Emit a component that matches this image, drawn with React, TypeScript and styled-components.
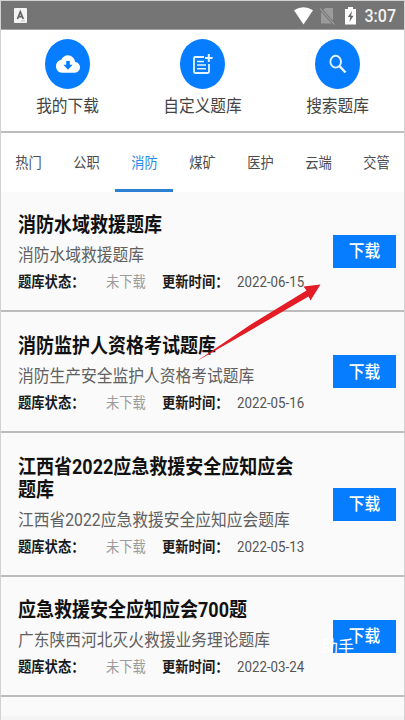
import React from 'react';
import styled, { createGlobalStyle } from 'styled-components';

const GlobalStyle = createGlobalStyle`
  * { box-sizing: border-box; }
  body {
    margin: 0;
    font-family: Roboto, "Noto Sans CJK SC", sans-serif;
    background: #fafafa;
  }
`;

const Screen = styled.div`
  position: relative;
  width: 405px;
  height: 720px;
  overflow: hidden;
  display: flex;
  flex-direction: column;
  background: #fafafa;
  border: 1px solid #d2d2d2;
  border-bottom: 0;
`;

const StatusBar = styled.header`
  flex: none;
  height: 29px;
  padding: 1px 8px 0 13px;
  display: flex;
  align-items: center;
  background: #757575;
  border-bottom: 1px solid #a5a5a5;
  color: #fff;
`;

const StatusIcons = styled.div`
  margin-left: auto;
  display: flex;
  align-items: center;
`;

/* Glyphs are taller than they are wide throughout the app. */
const Tall = styled.span`
  display: block;
  white-space: nowrap;
  transform: scaleY(1.11);
`;

const Clock = styled(Tall)`
  margin-left: 8px;
  font-size: 16px;
  line-height: 20px;
  font-weight: 500;
  color: #f3f3f3;
`;

const Actions = styled.section`
  flex: none;
  height: 103px;
  padding-top: 9px;
  display: grid;
  grid-template-columns: repeat(3, 135px);
  background: #fff;
  border-bottom: 2px solid #bdbdbd;
`;

const Action = styled.div`
  display: flex;
  flex-direction: column;
  align-items: center;
  margin-left: -2px;
`;

const Disc = styled.div`
  width: 45px;
  height: 50px;
  border-radius: 50%;
  background: #067dff;
  display: flex;
  align-items: center;
  justify-content: center;
`;

const ActionLabel = styled(Tall)`
  margin-top: 6px;
  font-size: 15.7px;
  line-height: 22px;
  color: #444;
`;

const Tabs = styled.nav`
  flex: none;
  height: 59px;
  display: flex;
  margin-left: -2px;
  background: #fff;
`;

const Tab = styled.div<{ $active?: boolean }>`
  flex: 0 0 58px;
  height: 59px;
  padding: 21px 0 0 1px;
  text-align: center;
  font-size: 13.2px;
  line-height: 20px;
  color: ${p => (p.$active ? '#2b8ae6' : '#4c4c4c')};
  border-bottom: 3px solid ${p => (p.$active ? '#2b80d3' : 'transparent')};
`;

const Row = styled.article<{ $height: number }>`
  flex: none;
  height: ${p => p.$height}px;
  padding: 0 8px 0 17px;
  display: flex;
  align-items: center;
  justify-content: space-between;
  border-bottom: 2px solid #bcbcbc;
`;

const Info = styled.div`
  width: 290px;
  padding-top: 5px;
`;

const Title = styled(Tall)`
  font-size: 18px;
  line-height: 23px;
  font-weight: 700;
  color: #111;
`;

const Subtitle = styled(Tall)`
  margin-top: 7px;
  font-size: 15.75px;
  line-height: 23px;
  color: #606060;
`;

const Meta = styled(Tall)`
  margin-top: 6px;
  display: grid;
  grid-template-columns: 88px 56px 75px 1fr;
  font-size: 13.3px;
  line-height: 22px;
  color: #555;
`;

const Key = styled.b`
  color: #1b1b1b;
`;

const State = styled.span`
  color: #9c9c9c;
`;

const DownloadButton = styled.button`
  flex: none;
  width: 63px;
  height: 33px;
  padding: 0;
  border: 0;
  background: #067dff;
  color: #fff;
  font: 500 15.7px/22px Roboto, "Noto Sans CJK SC", sans-serif;
`;

const Watermark = styled.div`
  position: absolute;
  left: 321px;
  top: 637px;
  font-size: 16px;
  line-height: 20px;
  color: #fff;
`;

const Pointer = styled.svg`
  position: absolute;
  left: 193px;
  top: 279px;
`;

const FooterStrip = styled.div`
  flex: none;
  margin-top: auto;
  height: 4px;
  background: #f5f5f5;
`;

const KeyboardIcon = () => (
  <svg width="13" height="15" viewBox="0 0 13 15">
    <rect width="13" height="15" rx="1" fill="#f4f4f4" />
    <path d="M3.5 11 6.3 3.7 9.3 11M4.6 8.7h3.5" fill="none" stroke="#666" strokeWidth="1.7" />
    <path d="M7 13h4" stroke="#bbb" />
  </svg>
);

const SignalIcons = () => (
  <svg width="64" height="20" viewBox="0 0 64 20">
    <path d="M1 4.2Q10.5-1.8 20 4.2L10.5 18.5Z" fill="#fff" />
    <path d="M32 2h8v15.5H28V6.5Z" fill="#9b9b9b" />
    <path d="M27.5 3 41 18" stroke="#757575" strokeWidth="3" />
    <path d="M27 2.5 41.5 18.5" stroke="#a4a4a4" strokeWidth="1.1" />
    <path d="M52 3h3V1h5v2h3v15.5H52Z" fill="#fff" />
    <path d="m59 5-4.2 6h2.5l-.9 5 4.2-6.3h-2.5Z" fill="#686868" />
  </svg>
);

const CloudIcon = () => (
  <svg width="24" height="26" viewBox="0 0 24 24" preserveAspectRatio="none">
    <path
      fill="#fff"
      d="M19.35 10.04A7.49 7.49 0 0 0 12 4C9.11 4 6.6 5.64 5.35 8.04A5.99 5.99 0 0 0 0 14c0 3.31 2.69 6 6 6h13c2.76 0 5-2.24 5-5 0-2.64-2.05-4.78-4.65-4.96Z"
    />
    <path fill="#067dff" d="M10.2 9.3h3.6v3.5h2.8L12 17.3l-4.6-4.5h2.8Z" />
  </svg>
);

const NoteAddIcon = () => (
  <svg width="22" height="24" viewBox="0 0 22 24" fill="none" stroke="#e4f4ff" strokeWidth="1.8">
    <path d="M12 5H3.2Q2 5 2 6.2v13.6Q2 21 3.2 21h12.6q1.2 0 1.2-1.2V12" />
    <path d="M5 9.5h7M5 13h9M5 16.7h9" strokeWidth="1.6" />
    <path d="M16.8 2v8M13 6h7.6" strokeWidth="2" />
  </svg>
);

const SearchIcon = () => (
  <svg width="20" height="22" viewBox="0 0 20 22" fill="none" stroke="#e4f4ff">
    <ellipse cx="7.7" cy="8.7" rx="5.3" ry="5.9" strokeWidth="1.9" />
    <path d="m11.5 13.1 6 6.4" strokeWidth="2.4" />
  </svg>
);

const actions = [
  { label: '我的下载', icon: <CloudIcon /> },
  { label: '自定义题库', icon: <NoteAddIcon /> },
  { label: '搜索题库', icon: <SearchIcon /> },
];

const tabs = ['热门', '公职', '消防', '煤矿', '医护', '云端', '交管'];

const banks = [
  { title: ['消防水域救援题库'], sub: '消防水域救援题库', date: '2022-06-15', height: 120 },
  { title: ['消防监护人资格考试题库'], sub: '消防生产安全监护人资格考试题库', date: '2022-05-16', height: 121 },
  { title: ['江西省2022应急救援安全应知应会', '题库'], sub: '江西省2022应急救援安全应知应会题库', date: '2022-05-13', height: 144 },
  { title: ['应急救援安全应知应会700题'], sub: '广东陕西河北灭火救援业务理论题库', date: '2022-03-24', height: 120 },
];

export default function App() {
  return (
    <>
      <GlobalStyle />
      <Screen>
        <StatusBar>
          <KeyboardIcon />
          <StatusIcons>
            <SignalIcons />
            <Clock>3:07</Clock>
          </StatusIcons>
        </StatusBar>
        <Actions>
          {actions.map(a => (
            <Action key={a.label}>
              <Disc>{a.icon}</Disc>
              <ActionLabel>{a.label}</ActionLabel>
            </Action>
          ))}
        </Actions>
        <Tabs>
          {tabs.map(t => (
            <Tab key={t} $active={t === '消防'}>
              <Tall>{t}</Tall>
            </Tab>
          ))}
        </Tabs>
        {banks.map(b => (
          <Row key={b.date} $height={b.height}>
            <Info>
              {b.title.map(line => (
                <Title key={line}>{line}</Title>
              ))}
              <Subtitle>{b.sub}</Subtitle>
              <Meta>
                <Key>题库状态：</Key>
                <State>未下载</State>
                <Key>更新时间：</Key>
                <span>{b.date}</span>
              </Meta>
            </Info>
            <DownloadButton>
              <Tall>下载</Tall>
            </DownloadButton>
          </Row>
        ))}
        <FooterStrip />
        <Pointer width="130" height="86" viewBox="194 280 130 86">
          <path d="M197 361 250 325 306.5 290.5 303.5 286.5 320.5 284.5 310.5 300.5 308.5 296.5 252 329.5Z" fill="#e31c25" />
        </Pointer>
        <Watermark>
          <Tall>助手</Tall>
        </Watermark>
      </Screen>
    </>
  );
}
